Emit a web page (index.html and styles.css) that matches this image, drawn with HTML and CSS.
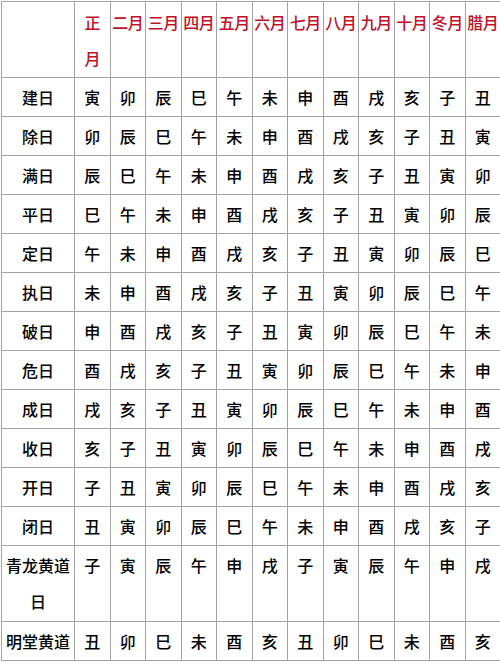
FILE: index.html
```html
<!DOCTYPE html>
<html lang="zh">
<head>
<meta charset="utf-8">
<link rel="stylesheet" href="styles.css">
</head>
<body>
<table class="cal">
<colgroup>
<col class="c-name">
<col span="12" class="c-mon">
</colgroup>
<thead>
<tr class="head">
<th></th><th>正<br>月</th><th>二月</th><th>三月</th><th>四月</th><th>五月</th><th>六月</th><th>七月</th><th>八月</th><th>九月</th><th>十月</th><th>冬月</th><th>腊月</th>
</tr>
</thead>
<tbody>
<tr><td>建日</td><td>寅</td><td>卯</td><td>辰</td><td>巳</td><td>午</td><td>未</td><td>申</td><td>酉</td><td>戌</td><td>亥</td><td>子</td><td>丑</td></tr>
<tr><td>除日</td><td>卯</td><td>辰</td><td>巳</td><td>午</td><td>未</td><td>申</td><td>酉</td><td>戌</td><td>亥</td><td>子</td><td>丑</td><td>寅</td></tr>
<tr><td>满日</td><td>辰</td><td>巳</td><td>午</td><td>未</td><td>申</td><td>酉</td><td>戌</td><td>亥</td><td>子</td><td>丑</td><td>寅</td><td>卯</td></tr>
<tr><td>平日</td><td>巳</td><td>午</td><td>未</td><td>申</td><td>酉</td><td>戌</td><td>亥</td><td>子</td><td>丑</td><td>寅</td><td>卯</td><td>辰</td></tr>
<tr><td>定日</td><td>午</td><td>未</td><td>申</td><td>酉</td><td>戌</td><td>亥</td><td>子</td><td>丑</td><td>寅</td><td>卯</td><td>辰</td><td>巳</td></tr>
<tr><td>执日</td><td>未</td><td>申</td><td>酉</td><td>戌</td><td>亥</td><td>子</td><td>丑</td><td>寅</td><td>卯</td><td>辰</td><td>巳</td><td>午</td></tr>
<tr><td>破日</td><td>申</td><td>酉</td><td>戌</td><td>亥</td><td>子</td><td>丑</td><td>寅</td><td>卯</td><td>辰</td><td>巳</td><td>午</td><td>未</td></tr>
<tr><td>危日</td><td>酉</td><td>戌</td><td>亥</td><td>子</td><td>丑</td><td>寅</td><td>卯</td><td>辰</td><td>巳</td><td>午</td><td>未</td><td>申</td></tr>
<tr><td>成日</td><td>戌</td><td>亥</td><td>子</td><td>丑</td><td>寅</td><td>卯</td><td>辰</td><td>巳</td><td>午</td><td>未</td><td>申</td><td>酉</td></tr>
<tr><td>收日</td><td>亥</td><td>子</td><td>丑</td><td>寅</td><td>卯</td><td>辰</td><td>巳</td><td>午</td><td>未</td><td>申</td><td>酉</td><td>戌</td></tr>
<tr><td>开日</td><td>子</td><td>丑</td><td>寅</td><td>卯</td><td>辰</td><td>巳</td><td>午</td><td>未</td><td>申</td><td>酉</td><td>戌</td><td>亥</td></tr>
<tr><td>闭日</td><td>丑</td><td>寅</td><td>卯</td><td>辰</td><td>巳</td><td>午</td><td>未</td><td>申</td><td>酉</td><td>戌</td><td>亥</td><td>子</td></tr>
<tr class="tall"><td>青龙黄道<br>日</td><td>子</td><td>寅</td><td>辰</td><td>午</td><td>申</td><td>戌</td><td>子</td><td>寅</td><td>辰</td><td>午</td><td>申</td><td>戌</td></tr>
<tr><td>明堂黄道</td><td>丑</td><td>卯</td><td>巳</td><td>未</td><td>酉</td><td>亥</td><td>丑</td><td>卯</td><td>巳</td><td>未</td><td>酉</td><td>亥</td></tr>
</tbody>
</table>
</body>
</html>
```
FILE: styles.css
```css
html, body {
  margin: 0;
  padding: 0;
  background: #fff;
}
body {
  padding: 1px 0 0 1px;
}
.cal {
  border-collapse: collapse;
  table-layout: fixed;
  width: 499px;
  font-family: "Noto Sans CJK SC", "Noto Sans", sans-serif;
  font-size: 16px;
  color: #000;
}
.c-name { width: 73px; }
.c-mon { width: 35.5px; }
.cal th,
.cal td {
  border: 1px solid #a3a3a3;
  padding: 1px 0 1px 0;
  line-height: 36px;
  text-align: center;
  vertical-align: top;
  white-space: nowrap;
  font-weight: 500;
  overflow: hidden;
}
.head th {
  color: #c0102a;
  padding: 2px 0 1px 0;
  letter-spacing: -0.5px;
}
.tall td {
  padding-bottom: 2px;
}
```
